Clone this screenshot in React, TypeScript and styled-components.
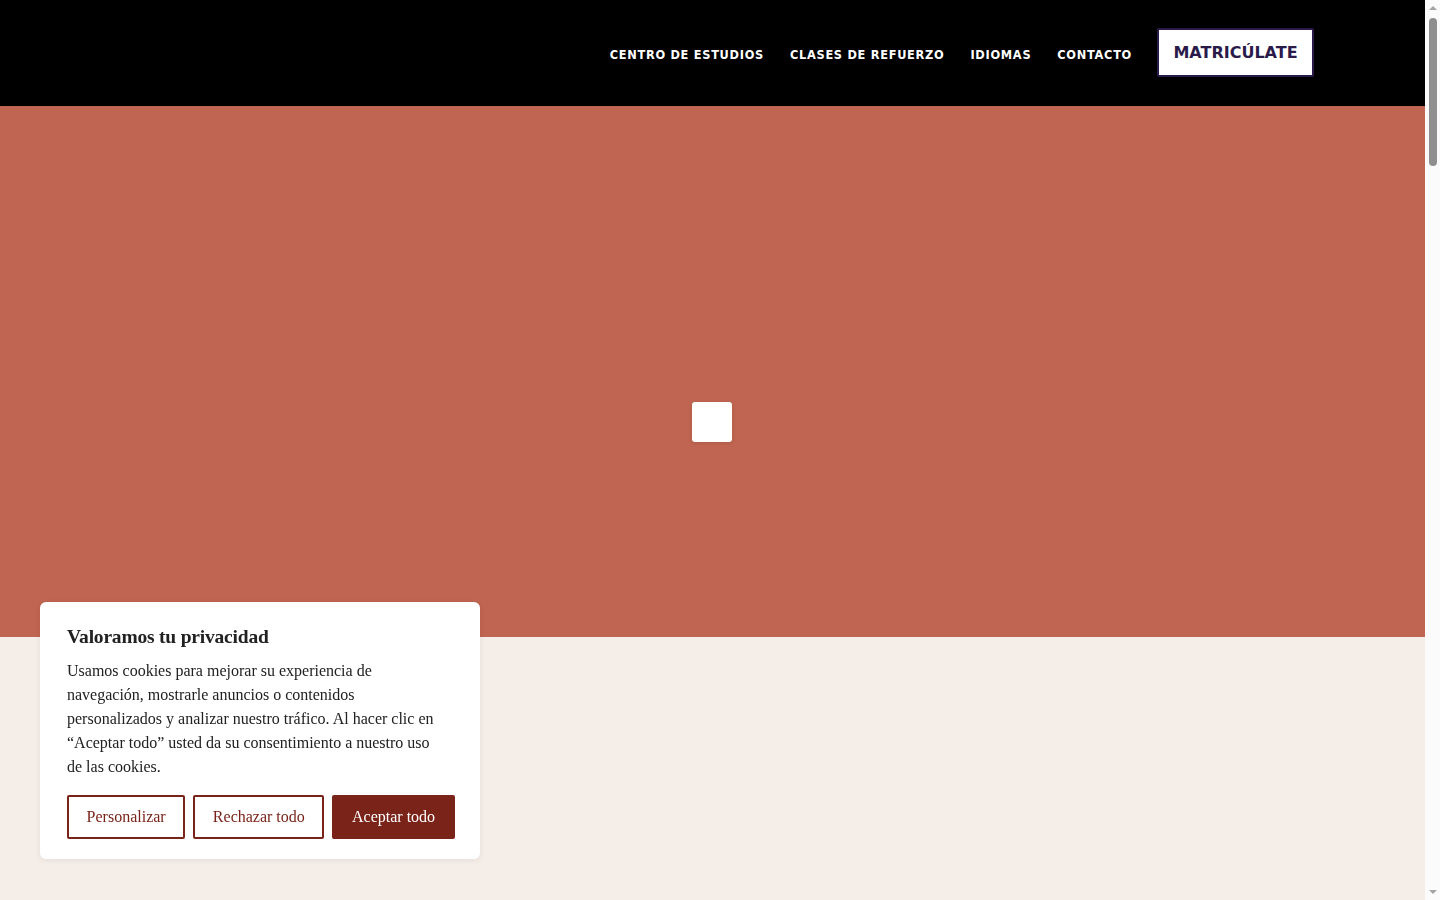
import * as React from 'react';
import styled, { createGlobalStyle } from 'styled-components';

const GlobalStyle = createGlobalStyle`
  html, body {
    margin: 0;
    padding: 0;
  }
  body {
    background: #f5ede8;
    font-family: "DejaVu Sans", sans-serif;
  }
`;

const Page = styled.div`
  display: flex;
  flex-direction: column;
  min-height: 5300px;
  margin-right: 15px;
`;

const Header = styled.header`
  height: 106px;
  background: #000;
  display: flex;
  align-items: center;
  justify-content: flex-end;
  padding-right: 111px;
  box-sizing: border-box;
`;

const Nav = styled.nav`
  display: flex;
  align-items: center;
  gap: 26px;
  margin-right: 25px;
  padding-top: 4px;
`;

const NavLink = styled.a`
  color: #fff;
  font-family: "DejaVu Sans", sans-serif;
  font-weight: 700;
  font-size: 11.4px;
  letter-spacing: 0.7px;
  text-transform: uppercase;
  text-decoration: none;
`;

const EnrolButton = styled.a`
  display: flex;
  align-items: center;
  justify-content: center;
  width: 157px;
  height: 49px;
  box-sizing: border-box;
  margin-top: -1px;
  background: #fff;
  border: 2px solid #2a1a4a;
  border-radius: 2px;
  color: #2a1a4a;
  font-family: "DejaVu Sans", sans-serif;
  font-weight: 700;
  font-size: 16px;
  text-decoration: none;
`;

const Hero = styled.section`
  height: 531px;
  background: #c06551;
  display: flex;
  align-items: center;
  justify-content: center;
  padding-top: 101px;
  padding-right: 1px;
  box-sizing: border-box;
`;

const Loader = styled.div`
  width: 40px;
  height: 40px;
  background: #fff;
  border-radius: 3px;
  box-shadow: 0 1px 4px rgba(0, 0, 0, 0.12);
`;

const Body = styled.main`
  flex: 1;
  background: #f5ede8;
`;

const Scrollbar = styled.div`
  position: fixed;
  top: 0;
  right: 0;
  bottom: 0;
  width: 15px;
  background: #fbfbfb;
  display: flex;
  flex-direction: column;
  align-items: center;
`;

const Arrow = styled.div<{ $down?: boolean }>`
  width: 0;
  height: 0;
  margin: 6px 0;
  border-left: 4px solid transparent;
  border-right: 4px solid transparent;
  ${(p) =>
    p.$down ? 'border-top: 4px solid #a3a3a3;' : 'border-bottom: 4px solid #a3a3a3;'}
`;

const Track = styled.div`
  flex: 1;
  width: 100%;
  display: flex;
  justify-content: center;
  padding-top: 2px;
`;

const Thumb = styled.div`
  width: 8px;
  height: 148px;
  border-radius: 4px;
  background: #8f8f8f;
`;

const CookieCard = styled.div`
  position: fixed;
  left: 40px;
  bottom: 41px;
  width: 440px;
  box-sizing: border-box;
  padding: 23px 27px 20px;
  background: #fff;
  border-radius: 6px;
  box-shadow: 0 1px 6px rgba(0, 0, 0, 0.08);
  font-family: "Liberation Serif", serif;
  color: #212121;
`;

const CookieTitle = styled.h2`
  margin: 0 0 10px;
  font-size: 19.5px;
  font-weight: 700;
  line-height: 24px;
  letter-spacing: -0.2px;
`;

const CookieText = styled.p`
  max-width: 374px;
  margin: 0 0 16px;
  font-size: 16px;
  line-height: 24px;
`;

const Actions = styled.div`
  display: flex;
  gap: 8px;
`;

const ActionButton = styled.button<{ $primary?: boolean }>`
  height: 44px;
  padding: 0 17.6px;
  box-sizing: border-box;
  border: 2px solid #7a2319;
  border-radius: 2px;
  background: ${(p) => (p.$primary ? '#7a2319' : '#fff')};
  color: ${(p) => (p.$primary ? '#fff' : '#7a2319')};
  font-family: "Liberation Serif", serif;
  font-size: 16px;
  white-space: nowrap;
  cursor: pointer;
`;

const navItems = ['Centro de estudios', 'Clases de refuerzo', 'Idiomas', 'Contacto'];

export default function App() {
  return (
    <>
      <GlobalStyle />
      <Page>
        <Header>
          <Nav>
            {navItems.map((item) => (
              <NavLink key={item} href="#">
                {item}
              </NavLink>
            ))}
          </Nav>
          <EnrolButton href="#">MATRICÚLATE</EnrolButton>
        </Header>
        <Hero>
          <Loader />
        </Hero>
        <Body />
      </Page>
      <CookieCard>
        <CookieTitle>Valoramos tu privacidad</CookieTitle>
        <CookieText>
          Usamos cookies para mejorar su experiencia de navegación, mostrarle anuncios o
          contenidos personalizados y analizar nuestro tráfico. Al hacer clic en “Aceptar
          todo” usted da su consentimiento a nuestro uso de las cookies.
        </CookieText>
        <Actions>
          <ActionButton>Personalizar</ActionButton>
          <ActionButton>Rechazar todo</ActionButton>
          <ActionButton $primary>Aceptar todo</ActionButton>
        </Actions>
      </CookieCard>
      <Scrollbar>
        <Arrow />
        <Track>
          <Thumb />
        </Track>
        <Arrow $down />
      </Scrollbar>
    </>
  );
}
